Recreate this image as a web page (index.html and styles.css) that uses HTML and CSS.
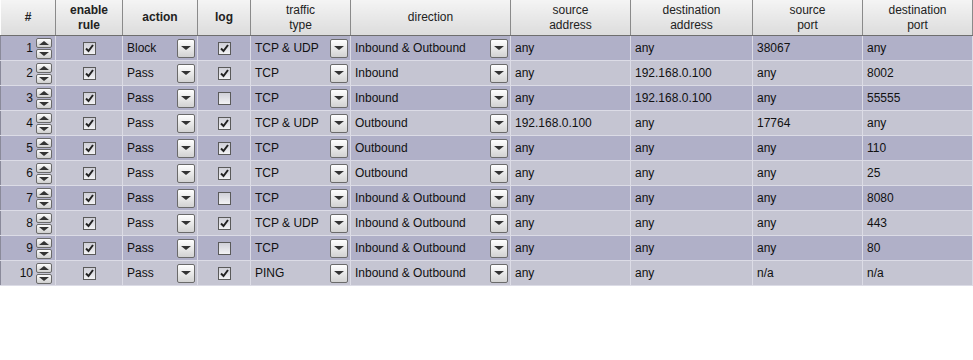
FILE: index.html
```html
<!DOCTYPE html>
<html>
<head>
<meta charset="utf-8">
<link rel="stylesheet" href="styles.css">
</head>
<body>
<table class="grid">
  <colgroup>
    <col class="c-num"><col class="c-en"><col class="c-act"><col class="c-log"><col class="c-tt">
    <col class="c-dir"><col class="c-sa"><col class="c-da"><col class="c-sp"><col class="c-dp">
  </colgroup>
  <thead>
    <tr>
      <th class="b">#</th>
      <th class="b">enable<br>rule</th>
      <th class="b">action</th>
      <th class="b">log</th>
      <th>traffic<br>type</th>
      <th>direction</th>
      <th>source<br>address</th>
      <th>destination<br>address</th>
      <th>source<br>port</th>
      <th>destination<br>port</th>
    </tr>
  </thead>
  <tbody id="rows"></tbody>
</table>
<script src="app.js"></script>
</body>
</html>
```

FILE: app.js
```js
const data = [
  [1, "Block", 1, "TCP & UDP", "Inbound & Outbound", "any", "any", "38067", "any"],
  [2, "Pass", 1, "TCP", "Inbound", "any", "192.168.0.100", "any", "8002"],
  [3, "Pass", 0, "TCP", "Inbound", "any", "192.168.0.100", "any", "55555"],
  [4, "Pass", 1, "TCP & UDP", "Outbound", "192.168.0.100", "any", "17764", "any"],
  [5, "Pass", 1, "TCP", "Outbound", "any", "any", "any", "110"],
  [6, "Pass", 1, "TCP", "Outbound", "any", "any", "any", "25"],
  [7, "Pass", 0, "TCP", "Inbound & Outbound", "any", "any", "any", "8080"],
  [8, "Pass", 1, "TCP & UDP", "Inbound & Outbound", "any", "any", "any", "443"],
  [9, "Pass", 0, "TCP", "Inbound & Outbound", "any", "any", "any", "80"],
  [10, "Pass", 1, "PING", "Inbound & Outbound", "any", "any", "n/a", "n/a"]
];
const spin = '<span class="spin"><span class="sb"><i class="up"></i></span><span class="sb"><i class="dn"></i></span></span>';
const dd = '<span class="dd"><i class="dn"></i></span>';
const cb = on => '<span class="cb">' + (on ? '<svg width="9" height="9" viewBox="0 0 9 9"><path d="M1 4.5 L3.5 7 L8 1" fill="none" stroke="#222" stroke-width="2"/></svg>' : '') + '</span>';
const rows = data.map(r => `<tr>
<td class="num"><span>${r[0]}</span>${spin}</td>
<td class="ctr">${cb(1)}</td>
<td><div class="combo"><span>${r[1]}</span>${dd}</div></td>
<td class="ctr">${cb(r[2])}</td>
<td><div class="combo"><span>${r[3]}</span>${dd}</div></td>
<td><div class="combo"><span>${r[4]}</span>${dd}</div></td>
<td>${r[5]}</td><td>${r[6]}</td><td>${r[7]}</td><td>${r[8]}</td>
</tr>`).join("");
document.getElementById("rows").innerHTML = rows;
```

FILE: styles.css
```css
html, body { margin: 0; padding: 0; background: #fff; }
body { font-family: "Liberation Sans", Arial, sans-serif; font-size: 12px; color: #111; }
.grid { border-collapse: collapse; table-layout: fixed; width: 972px; }
.c-num { width: 55px; } .c-en { width: 67px; } .c-act { width: 75px; } .c-log { width: 53px; }
.c-tt { width: 100px; } .c-dir { width: 160px; } .c-sa { width: 120px; } .c-da { width: 122px; }
.c-sp { width: 110px; } .c-dp { width: 110px; }
th {
  height: 35px; padding: 0; font-weight: normal; font-size: 12px; line-height: 15px; color: #222;
  background: linear-gradient(#f4f4f4, #dcdcdc);
  border-left: 1px solid #fdfdfd; border-right: 1px solid #8a8a8a; border-bottom: 1px solid #6e6e6e;
  text-align: center;
}
th.b { font-weight: bold; }
tbody tr { height: 25px; }
tbody tr:nth-child(odd) td { background: #b0b0c8; }
tbody tr:nth-child(even) td { background: #c5c5d2; }
td { padding: 0 0 0 4px; border: 1px solid #dcdce6; border-top: 0; white-space: nowrap; overflow: hidden; }
tbody td:first-child { border-left: 1px solid #8a8a9a; }
td.num { padding: 0; text-align: right; }
td.num > span { vertical-align: middle; margin-right: 3px; }
.spin { display: inline-flex; flex-direction: column; vertical-align: middle; margin-right: 1px; }
.sb {
  width: 14px; height: 8px; display: flex; align-items: center; justify-content: center;
  background: linear-gradient(#fdfdfd, #cfcfcf); border: 1px solid #6a6a6a; border-radius: 2px;
}
.sb + .sb { margin-top: 1px; }
.up { width: 0; height: 0; border-left: 5px solid transparent; border-right: 5px solid transparent; border-bottom: 4px solid #333; }
.dn { width: 0; height: 0; border-left: 5px solid transparent; border-right: 5px solid transparent; border-top: 4px solid #333; }
.ctr { text-align: center; padding: 0; }
.cb {
  display: inline-flex; align-items: center; justify-content: center; vertical-align: middle;
  width: 11px; height: 11px; border: 1px solid #5a5a5a; background: linear-gradient(#d0d0d8, #f2f2f4);
}
.combo { display: flex; align-items: center; justify-content: space-between; padding-right: 2px; }
.dd {
  width: 16px; height: 17px; display: flex; align-items: center; justify-content: center;
  background: linear-gradient(#ffffff, #d2d2d2); border: 1px solid #6a6a6a; border-radius: 2px;
}
```
